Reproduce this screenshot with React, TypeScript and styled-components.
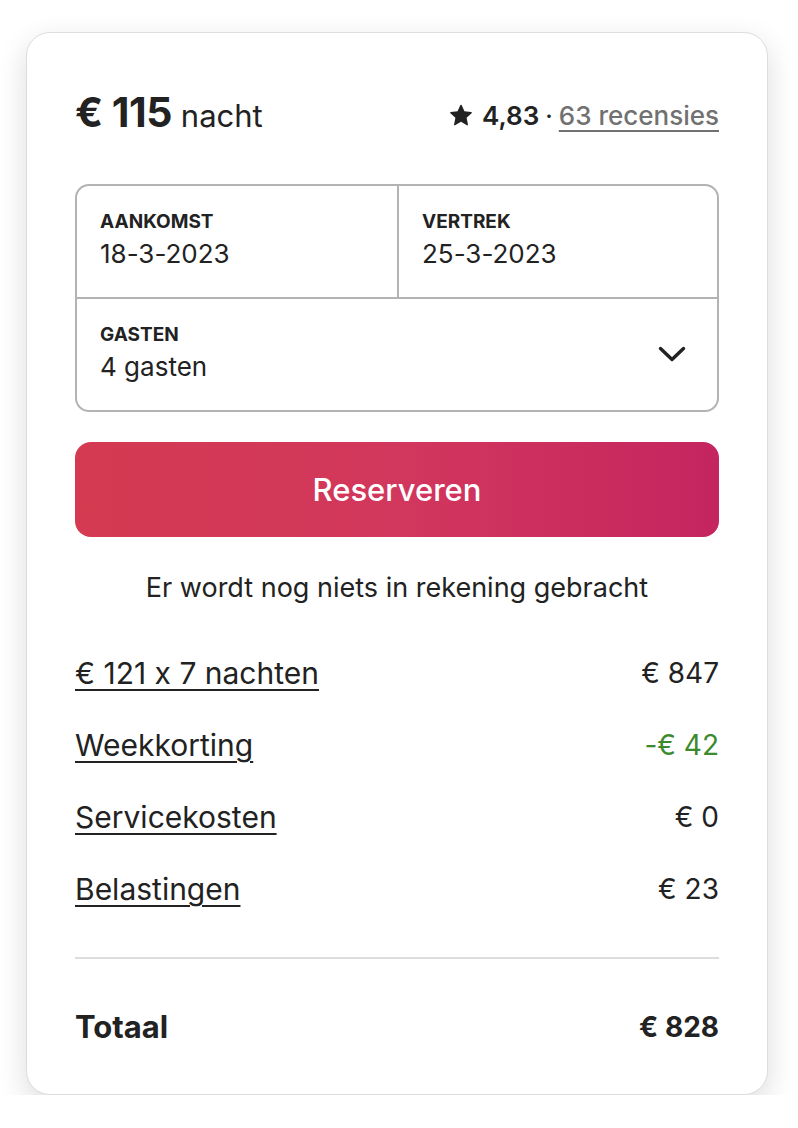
import { FC } from 'react'
import styled, { createGlobalStyle } from "styled-components";

type Line = { label: string, amount: string, discount?: boolean }

const lines: Line[] = [
    { label: '€ 121 x 7 nachten', amount: '€ 847' },
    { label: 'Weekkorting', amount: '-€ 42', discount: true },
    { label: 'Servicekosten', amount: '€ 0' },
    { label: 'Belastingen', amount: '€ 23' },
]

const StarIcon: FC = () => (
    <svg width="22" height="22" viewBox="0 0 32 32" fill="#222">
        <path d="M15.1 1.58l-4.13 8.88-9.86 1.27a1 1 0 0 0-.54 1.74l7.3 6.57-1.970 9.85a1 1 0 0 0 1.48 1.06l8.62-5 8.63 5a1 1 0 0 0 1.48-1.06l-1.97-9.85 7.3-6.57a1 1 0 0 0-.55-1.73l-9.86-1.28-4.12-8.88a1 1 0 0 0-1.82 0z" />
    </svg>
)

const Chevron: FC = () => (
    <svg width="28" height="16" viewBox="0 0 28 16" fill="none">
        <path d="M2.5 2.5 L14 13.5 L25.5 2.5" stroke="#222" strokeWidth="3.4" strokeLinecap="round" strokeLinejoin="round" />
    </svg>
)

const App: FC = () => {
    return (<>
        <GlobalStyle />
        <Card>
            <Header>
                <Price>
                    <Amount>€ 115</Amount>
                    <Unit>nacht</Unit>
                </Price>
                <Rating>
                    <StarIcon />
                    <Score>4,83</Score>
                    <Dot>·</Dot>
                    <Reviews href="#">63 recensies</Reviews>
                </Rating>
            </Header>

            <Picker>
                <Cell>
                    <Label>Aankomst</Label>
                    <Value>18-3-2023</Value>
                </Cell>
                <Cell divided>
                    <Label>Vertrek</Label>
                    <Value>25-3-2023</Value>
                </Cell>
                <GuestCell>
                    <div>
                        <Label>Gasten</Label>
                        <Value>4 gasten</Value>
                    </div>
                    <Chevron />
                </GuestCell>
            </Picker>

            <ReserveButton>Reserveren</ReserveButton>
            <Note>Er wordt nog niets in rekening gebracht</Note>

            <Lines>
                {
                    lines.map(l =>
                        <Row key={ l.label }>
                            <RowLabel>{ l.label }</RowLabel>
                            <RowAmount discount={ l.discount }>{ l.amount }</RowAmount>
                        </Row>
                    )
                }
            </Lines>
            <Divider />
            <TotalRow>
                <TotalLabel>Totaal</TotalLabel>
                <span>€ 828</span>
            </TotalRow>
        </Card>
    </>)
}

const GlobalStyle = createGlobalStyle`
  body {
    margin: 0;
    background: #fff;
    font-family: Inter, "Noto Sans", sans-serif;
    font-feature-settings: "calt" 0;
    color: #222;
  }
`

const Card = styled.div`
  width: 644px;
  margin: 32px 0 0 26px;
  padding: 55px 48px 49px;
  border: 1px solid #dddddd;
  border-radius: 24px;
  background: #fff;
  box-shadow: 0 10px 30px rgba(0, 0, 0, 0.14);
`

const Header = styled.div`
  display: flex;
  justify-content: space-between;
  align-items: baseline;
  height: 48px;
  line-height: 48px;
  margin-bottom: 48px;
`

const Price = styled.div`
  display: flex;
  align-items: baseline;
  gap: 9px;
`

const Amount = styled.span`
  font-size: 41px;
  font-weight: 700;
  letter-spacing: -0.5px;
`

const Unit = styled.span`
  font-size: 31px;
  font-weight: 400;
`

const Rating = styled.div`
  display: flex;
  align-items: center;
  gap: 6px;
  font-size: 26px;
  font-weight: 600;
  svg {
    margin-right: 4px;
    position: relative;
    top: -1px;
  }
`

const Score = styled.span``

const Dot = styled.span`
  font-weight: 400;
`

const Reviews = styled.a`
  color: #717171;
  font-weight: 500;
  text-decoration: underline;
  text-decoration-thickness: 2px;
  text-underline-offset: 5px;
`

const Picker = styled.div`
  display: grid;
  grid-template-columns: 1fr 1fr;
  border: 2px solid #b3b3b3;
  border-radius: 14px;
  overflow: hidden;
`

const Cell = styled.div<{ divided?: boolean }>`
  padding: 23px 22px 24px 23px;
  border-bottom: 2px solid #b3b3b3;
  border-left: ${p => p.divided ? '2px solid #b3b3b3' : 'none'};
`

const GuestCell = styled.div`
  grid-column: 1 / span 2;
  display: flex;
  align-items: center;
  justify-content: space-between;
  padding: 23px 31px 24px 23px;
`

const Label = styled.div`
  font-size: 19px;
  font-weight: 700;
  line-height: 26px;
  text-transform: uppercase;
`

const Value = styled.div`
  font-size: 26px;
  line-height: 38px;
`

const ReserveButton = styled.button`
  display: block;
  width: 100%;
  height: 95px;
  margin-top: 30px;
  border: none;
  border-radius: 16px;
  background: linear-gradient(to right, #d43a50 0%, #d2375d 50%, #c5255f 100%);
  color: #fff;
  font-family: inherit;
  font-size: 31px;
  font-weight: 500;
  cursor: pointer;
`

const Note = styled.p`
  margin: 35px 0 0;
  text-align: center;
  font-size: 27px;
  line-height: 32px;
`

const Lines = styled.div`
  display: flex;
  flex-direction: column;
  gap: 36px;
  margin-top: 51px;
`

const Row = styled.div`
  display: flex;
  justify-content: space-between;
  align-items: center;
  height: 36px;
  font-size: 28px;
  line-height: 36px;
`

const RowLabel = styled.a`
  font-size: 30px;
  color: #222;
  text-decoration: underline;
  text-decoration-thickness: 2px;
  text-underline-offset: 5px;
`

const RowAmount = styled.span<{ discount?: boolean }>`
  color: ${p => p.discount ? '#3c8a2e' : '#222'};
`

const Divider = styled.div`
  border-bottom: 2px solid #dddddd;
  margin-top: 50px;
`

const TotalRow = styled.div`
  display: flex;
  justify-content: space-between;
  align-items: center;
  height: 36px;
  margin-top: 50px;
  font-size: 28px;
  font-weight: 700;
  line-height: 36px;
`

const TotalLabel = styled.span`
  font-size: 31px;
`

export default App;
